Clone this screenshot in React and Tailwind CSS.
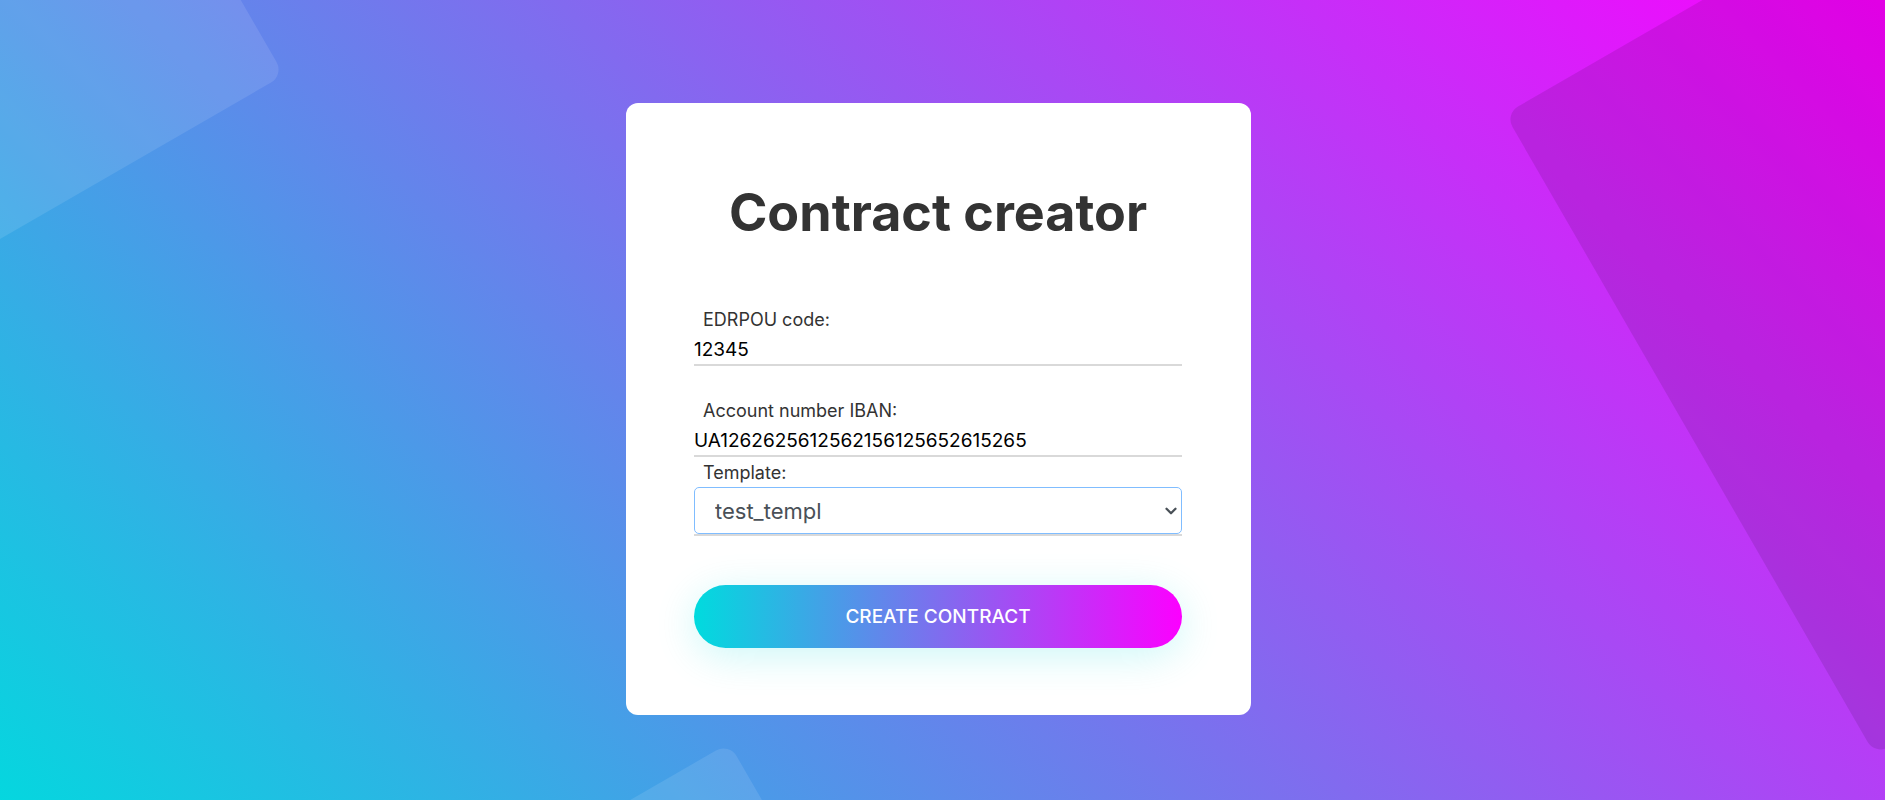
import { ChevronDown } from "lucide-react";

function TextField({ id, label, value }) {
  return (
    <div className="flex flex-col">
      <label htmlFor={id} className="pl-[9px] text-lg leading-6 text-[#333333]">
        {label}
      </label>
      <input
        id={id}
        type="text"
        defaultValue={value}
        className="h-[34px] w-full border-b-2 border-[#d9d9d9] bg-transparent pt-0.5 text-[19px] text-black outline-none"
      />
    </div>
  );
}

export default function App() {
  return (
    <div className="h-screen overflow-x-hidden overflow-y-auto [scrollbar-width:none]">
      <main className="relative flex min-h-full items-start justify-center overflow-hidden bg-[linear-gradient(45deg,#00dbde,#fc00ff)] pt-[103px] pr-2 pb-[140px] font-['Inter',sans-serif]">
        <div className="absolute top-[-225px] left-[-116px] h-[300px] w-[400px] origin-bottom-right -rotate-30 rounded-[15px] bg-white/10" />
        <div className="absolute top-[743px] left-[329px] h-[300px] w-[400px] origin-top-right -rotate-30 rounded-[15px] bg-white/10" />
        <div className="absolute top-[114px] right-[-120px] h-[740px] w-[500px] origin-top-left -rotate-30 rounded-[15px] bg-black/10" />

        <form
          className="relative flex w-[625px] max-w-full flex-col rounded-xl bg-white pt-[73px] pr-[69px] pb-[67px] pl-[68px]"
          onSubmit={(event) => event.preventDefault()}
        >
          <h1 className="text-center text-[52px] leading-[74px] font-bold text-[#333333]">
            Contract creator
          </h1>

          <div className="mt-[58px] flex flex-col gap-[33px]">
            <TextField id="edrpou" label="EDRPOU code:" value="12345" />
            <TextField
              id="iban"
              label="Account number IBAN:"
              value="UA1262625612562156125652615265"
            />
          </div>

          <div className="mt-1 flex flex-col border-b-2 border-[#d9d9d9]">
            <label htmlFor="template" className="pb-0.5 pl-[9px] text-lg leading-6 text-[#333333]">
              Template:
            </label>
            <div className="relative flex">
              <select
                id="template"
                defaultValue="test_templ"
                className="h-[47px] w-full appearance-none rounded-[5px] border border-[#80bdff] bg-white pt-0.5 pl-5 text-[22px] text-[#495057] outline-none"
              >
                <option value="test_templ">test_templ</option>
              </select>
              <ChevronDown
                aria-hidden="true"
                strokeWidth={3}
                className="pointer-events-none absolute inset-y-0 right-0.5 my-auto size-[18px] text-[#495057]"
              />
            </div>
          </div>

          <button
            type="submit"
            className="mt-[49px] h-[63px] rounded-full bg-[linear-gradient(90deg,#00dbde,#fc00ff)] pt-0.5 text-[19px] font-medium text-white shadow-[0_8px_40px_rgba(0,219,222,0.2)]"
          >
            CREATE CONTRACT
          </button>
        </form>
      </main>
    </div>
  );
}
